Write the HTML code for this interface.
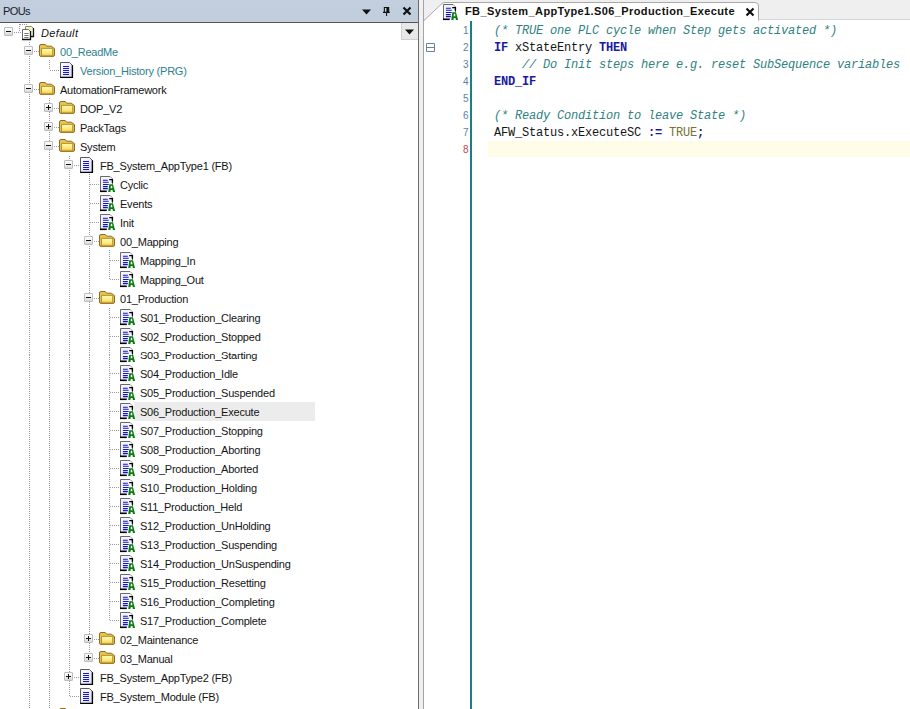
<!DOCTYPE html>
<html><head><meta charset="utf-8">
<style>
html,body{margin:0;padding:0;width:910px;height:709px;overflow:hidden;background:#fff;position:relative;font-family:"Liberation Sans",sans-serif;}
.abs{position:absolute;}
#lp{position:absolute;left:0;top:0;width:418px;height:709px;background:#fff;}
#hdr{position:absolute;left:0;top:0;width:418px;height:20px;background:linear-gradient(#c3cfde,#bfcddd);}
#hdr2{position:absolute;left:0;top:20px;width:418px;height:2px;background:#c9cdd6;}
#hdr3{position:absolute;left:0;top:22px;width:418px;height:1px;background:#4f565e;}
#pous{position:absolute;left:3px;top:1px;font-size:11px;line-height:21px;color:#1a1a2a;letter-spacing:-0.6px;}
.vd{position:absolute;width:1px;background:repeating-linear-gradient(to bottom,#9c9c9c 0 1px,transparent 1px 2px);}
.hd{position:absolute;height:1px;background:repeating-linear-gradient(to right,#9c9c9c 0 1px,transparent 1px 2px);}
.ex{position:absolute;width:7px;height:7px;border:1px solid #bdbdbd;border-radius:1px;background:linear-gradient(#fdfdfd,#f0f0f0 50%,#d6d6d6);}
.ex:before{content:"";position:absolute;left:1px;top:3px;width:5px;height:1px;background:#111;}
.ex.plus:after{content:"";position:absolute;left:3px;top:1px;width:1px;height:5px;background:#111;}
.ic{position:absolute;overflow:visible;}
.tx{position:absolute;font-size:11px;line-height:19px;white-space:pre;color:#141414;letter-spacing:-0.22px;}
.tx.it{font-style:italic;letter-spacing:0.35px;margin-left:1px;}
.tx.tl{color:#2b8190;}
#split{position:absolute;left:418px;top:0;width:1px;height:709px;background:#6a6a6a;}
#splitm{position:absolute;left:419px;top:0;width:4px;height:709px;background:#f0f0f0;}
#split2{position:absolute;left:423px;top:0;width:1px;height:709px;background:#a4a4a4;}
#tabstrip{position:absolute;left:424px;top:0;width:486px;height:20px;background:#efefef;}
#tabline{position:absolute;left:424px;top:19px;width:486px;height:1px;background:#d8d8d8;}
#ed{position:absolute;left:424px;top:20px;width:486px;height:689px;background:#fff;}
.ln{position:absolute;left:440px;width:28.5px;text-align:right;font-size:10px;line-height:17px;color:#5f7ea2;}
.cl{position:absolute;left:494px;font-family:"Liberation Mono",monospace;font-size:12px;letter-spacing:-0.2px;line-height:17px;white-space:pre;color:#141414;}
.cm{color:#2f8282;font-style:italic;}
.kw{color:#1a1a9e;font-weight:bold;}
.bl{color:#77722c;}
.op{color:#1c1c86;font-weight:bold;}
</style></head><body>
<svg width="0" height="0" style="position:absolute">
<defs>
<linearGradient id="fg" x1="0" y1="0" x2="0" y2="1"><stop offset="0" stop-color="#fffab8"/><stop offset="0.65" stop-color="#fde978"/><stop offset="1" stop-color="#eeb63c"/></linearGradient>
<linearGradient id="pg" x1="0" y1="0" x2="1" y2="1"><stop offset="0" stop-color="#ffffff"/><stop offset="1" stop-color="#dcdcf4"/></linearGradient>
<symbol id="folder" viewBox="0 0 17 13">
<path d="M0.5 2 Q0.5 0.5 2 0.5 H6.3 L7.6 2.2 H12.2 L15.5 4.6 V11 Q15.5 12.4 14 12.4 H2 Q0.5 12.4 0.5 11Z" fill="#e9c44e" stroke="#8e6c22" stroke-width="1"/>
<path d="M2.5 4.4 H13.7 V11.9 H2.5Z" fill="url(#fg)" stroke="#b08a30" stroke-width="0.9"/>
</symbol>
<symbol id="doc" viewBox="0 0 14 17">
<path d="M0.5 0.5 H9.5 L12.5 3.5 V15.5 H0.5Z" fill="url(#pg)" stroke="#5a5a5a" stroke-width="1"/>
<path d="M12.4 3.2 V15.4 H0.2" fill="none" stroke="#000" stroke-width="1.4"/>
<path d="M3 4.5H9M3 6.5H9M3 8.5H9M3 10.5H9M3 12.5H9" stroke="#1818c0" stroke-width="1.1"/>
</symbol>
<symbol id="docA" viewBox="0 0 17 17">
<path d="M0.5 15 V0.5 H10 L12.5 3 V8" fill="#f6f6ff" stroke="#6a6a6a" stroke-width="1"/>
<path d="M1 1 H10 L12 3 V8 H8 V15 H1Z" fill="#f4f4fe"/>
<path d="M9.2 3.6 H12.4 V6.8" fill="none" stroke="#000" stroke-width="1.4"/>
<path d="M0 15.3 H6.8" stroke="#000" stroke-width="1.6"/>
<path d="M2.9 4.3H7.8M2.9 6.3H8.7M2.9 8.5H8.7M2.9 10.6H7.8M2.9 12.6H7.8" stroke="#1414b4" stroke-width="1.1"/>
<path d="M9.3 8.2 H13 L15.1 15.9 H12.9 L12.5 14.1 H10.8 L10.4 15.9 H8.2Z M10.9 9.7 H12.1 L12.4 12.3 H10.6Z" fill="#0a7c10" fill-rule="evenodd"/>
</symbol>
<symbol id="def" viewBox="0 0 14 16">
<path d="M4.5 1.5 H10.5 L12.5 3.5 V11.5 H4.5Z" fill="#f0f4c0" stroke="#8a8a70" stroke-width="1"/>
<path d="M12.5 3 V11.5 H10" fill="none" stroke="#1a1a1a" stroke-width="1.3"/>
<path d="M1.5 4.5 H7.5 L9.5 6.5 V14.5 H1.5Z" fill="#fff" stroke="#6a6a6a" stroke-width="1"/>
<path d="M9.5 6 V14.5 H1" fill="none" stroke="#111" stroke-width="1.3"/>
<path d="M3.3 8.5H7.6M3.3 10.5H7.6M3.3 12.5H7.6" stroke="#6a6a6a" stroke-width="0.9"/>
</symbol>
</defs></svg>

<div id="lp">
<div id="hdr"></div><div id="hdr2"></div><div id="hdr3"></div>
<div id="pous">POUs</div>
<svg class="abs" style="left:362px;top:9px" width="9" height="6"><path d="M0 0.5 H9 L4.5 5.5Z" fill="#111"/></svg>
<svg class="abs" style="left:382px;top:6px" width="10" height="11"><path d="M1.8 0.9 H7.2 V5.8 H7.8 V6.9 H1 V5.8 H1.8Z M2.9 2 V5.8 H4.4 V2Z" fill="#111" fill-rule="evenodd"/><rect x="4" y="6.9" width="1.1" height="3" fill="#111"/></svg>
<svg class="abs" style="left:402px;top:6px" width="10" height="10"><path d="M1.5 1.5 L8.5 8.5 M8.5 1.5 L1.5 8.5" stroke="#111" stroke-width="2.2"/></svg>
<div class="abs" style="left:401px;top:23px;width:16px;height:16px;background:#e8e8e8;border-left:1px solid #cfcfcf;border-bottom:1px solid #cfcfcf;"></div>
<svg class="abs" style="left:405px;top:29px" width="9" height="6"><path d="M0 0.5 H9 L4.5 5.5Z" fill="#111"/></svg>
<div class="abs" style="left:0;top:0;width:418px;height:355px;overflow:hidden"><div class="abs" style="left:134px;top:403px;width:181px;height:19px;background:#ececec"></div>
<div class="hd" style="left:33px;top:51px;width:6px;background-position:-1px 0"></div>
<div class="hd" style="left:49px;top:70px;width:10px;background-position:-1px 0"></div>
<div class="hd" style="left:33px;top:89px;width:6px;background-position:-1px 0"></div>
<div class="hd" style="left:53px;top:108px;width:6px;background-position:-1px 0"></div>
<div class="hd" style="left:53px;top:127px;width:6px;background-position:-1px 0"></div>
<div class="hd" style="left:53px;top:146px;width:6px;background-position:-1px 0"></div>
<div class="hd" style="left:73px;top:165px;width:6px;background-position:-1px 0"></div>
<div class="hd" style="left:89px;top:184px;width:10px;background-position:-1px 0"></div>
<div class="hd" style="left:89px;top:203px;width:10px;background-position:-1px 0"></div>
<div class="hd" style="left:89px;top:222px;width:10px;background-position:-1px 0"></div>
<div class="hd" style="left:93px;top:241px;width:6px;background-position:-1px 0"></div>
<div class="hd" style="left:109px;top:260px;width:10px;background-position:-1px 0"></div>
<div class="hd" style="left:109px;top:279px;width:10px;background-position:-1px 0"></div>
<div class="hd" style="left:93px;top:298px;width:6px;background-position:-1px 0"></div>
<div class="hd" style="left:109px;top:317px;width:10px;background-position:-1px 0"></div>
<div class="hd" style="left:109px;top:336px;width:10px;background-position:-1px 0"></div>
<div class="hd" style="left:109px;top:355px;width:10px;background-position:-1px 0"></div>
<div class="hd" style="left:109px;top:374px;width:10px;background-position:-1px 0"></div>
<div class="hd" style="left:109px;top:393px;width:10px;background-position:-1px 0"></div>
<div class="hd" style="left:109px;top:412px;width:10px;background-position:-1px 0"></div>
<div class="hd" style="left:109px;top:431px;width:10px;background-position:-1px 0"></div>
<div class="hd" style="left:109px;top:450px;width:10px;background-position:-1px 0"></div>
<div class="hd" style="left:109px;top:469px;width:10px;background-position:-1px 0"></div>
<div class="hd" style="left:109px;top:488px;width:10px;background-position:-1px 0"></div>
<div class="hd" style="left:109px;top:507px;width:10px;background-position:-1px 0"></div>
<div class="hd" style="left:109px;top:526px;width:10px;background-position:-1px 0"></div>
<div class="hd" style="left:109px;top:545px;width:10px;background-position:-1px 0"></div>
<div class="hd" style="left:109px;top:564px;width:10px;background-position:-1px 0"></div>
<div class="hd" style="left:109px;top:583px;width:10px;background-position:-1px 0"></div>
<div class="hd" style="left:109px;top:602px;width:10px;background-position:-1px 0"></div>
<div class="hd" style="left:109px;top:621px;width:10px;background-position:-1px 0"></div>
<div class="hd" style="left:93px;top:640px;width:6px;background-position:-1px 0"></div>
<div class="hd" style="left:93px;top:659px;width:6px;background-position:-1px 0"></div>
<div class="hd" style="left:73px;top:678px;width:6px;background-position:-1px 0"></div>
<div class="hd" style="left:69px;top:697px;width:10px;background-position:-1px 0"></div>
<div class="hd" style="left:49px;top:716px;width:10px;background-position:-1px 0"></div>
<div class="vd" style="left:29px;top:41px;height:48px;background-position:0 -1px"></div>
<div class="vd" style="left:49px;top:60px;height:10px;background-position:0 0px"></div>
<div class="vd" style="left:49px;top:98px;height:633px;background-position:0 0px"></div>
<div class="vd" style="left:69px;top:155px;height:542px;background-position:0 -1px"></div>
<div class="vd" style="left:89px;top:174px;height:485px;background-position:0 0px"></div>
<div class="vd" style="left:109px;top:250px;height:29px;background-position:0 0px"></div>
<div class="vd" style="left:109px;top:307px;height:314px;background-position:0 -1px"></div>
<div class="vd" style="left:19px;top:24px;height:8px;background-position:0 0px"></div>
<div class="vd" style="left:29px;top:58px;height:672px;background-position:0 0px"></div>
<div class="hd" style="left:19px;top:24px;width:8px;background-position:-1px 0"></div>
<div class="hd" style="left:13px;top:32px;width:8px;background-position:-1px 0"></div>
<div class="ex minus" style="left:4px;top:27px"></div>
<svg class="ic" style="left:21px;top:25px" width="14" height="16"><use href="#def"/></svg>
<div class="tx it" style="left:40px;top:24px">Default</div>
<div class="ex minus" style="left:24px;top:46px"></div>
<svg class="ic" style="left:39px;top:44px" width="17" height="13"><use href="#folder"/></svg>
<div class="tx tl" style="left:60px;top:43px">00_ReadMe</div>
<svg class="ic" style="left:60px;top:62px" width="14" height="17"><use href="#doc"/></svg>
<div class="tx tl" style="left:80px;top:62px">Version_History (PRG)</div>
<div class="ex minus" style="left:24px;top:84px"></div>
<svg class="ic" style="left:39px;top:82px" width="17" height="13"><use href="#folder"/></svg>
<div class="tx" style="left:60px;top:81px">AutomationFramework</div>
<div class="ex plus" style="left:44px;top:103px"></div>
<svg class="ic" style="left:59px;top:101px" width="17" height="13"><use href="#folder"/></svg>
<div class="tx" style="left:80px;top:100px">DOP_V2</div>
<div class="ex plus" style="left:44px;top:122px"></div>
<svg class="ic" style="left:59px;top:120px" width="17" height="13"><use href="#folder"/></svg>
<div class="tx" style="left:80px;top:119px">PackTags</div>
<div class="ex minus" style="left:44px;top:141px"></div>
<svg class="ic" style="left:59px;top:139px" width="17" height="13"><use href="#folder"/></svg>
<div class="tx" style="left:80px;top:138px">System</div>
<div class="ex minus" style="left:64px;top:160px"></div>
<svg class="ic" style="left:80px;top:157px" width="14" height="17"><use href="#doc"/></svg>
<div class="tx" style="left:100px;top:157px">FB_System_AppType1 (FB)</div>
<svg class="ic" style="left:100px;top:176px" width="17" height="17"><use href="#docA"/></svg>
<div class="tx" style="left:120px;top:176px">Cyclic</div>
<svg class="ic" style="left:100px;top:195px" width="17" height="17"><use href="#docA"/></svg>
<div class="tx" style="left:120px;top:195px">Events</div>
<svg class="ic" style="left:100px;top:214px" width="17" height="17"><use href="#docA"/></svg>
<div class="tx" style="left:120px;top:214px">Init</div>
<div class="ex minus" style="left:84px;top:236px"></div>
<svg class="ic" style="left:99px;top:234px" width="17" height="13"><use href="#folder"/></svg>
<div class="tx" style="left:120px;top:233px">00_Mapping</div>
<svg class="ic" style="left:120px;top:252px" width="17" height="17"><use href="#docA"/></svg>
<div class="tx" style="left:140px;top:252px">Mapping_In</div>
<svg class="ic" style="left:120px;top:271px" width="17" height="17"><use href="#docA"/></svg>
<div class="tx" style="left:140px;top:271px">Mapping_Out</div>
<div class="ex minus" style="left:84px;top:293px"></div>
<svg class="ic" style="left:99px;top:291px" width="17" height="13"><use href="#folder"/></svg>
<div class="tx" style="left:120px;top:290px">01_Production</div>
<svg class="ic" style="left:120px;top:309px" width="17" height="17"><use href="#docA"/></svg>
<div class="tx" style="left:140px;top:309px">S01_Production_Clearing</div>
<svg class="ic" style="left:120px;top:328px" width="17" height="17"><use href="#docA"/></svg>
<div class="tx" style="left:140px;top:328px">S02_Production_Stopped</div>
<svg class="ic" style="left:120px;top:347px" width="17" height="17"><use href="#docA"/></svg>
<div class="tx" style="left:140px;top:347px">S03_Production_Starting</div>
<svg class="ic" style="left:120px;top:366px" width="17" height="17"><use href="#docA"/></svg>
<div class="tx" style="left:140px;top:366px">S04_Production_Idle</div>
<svg class="ic" style="left:120px;top:385px" width="17" height="17"><use href="#docA"/></svg>
<div class="tx" style="left:140px;top:385px">S05_Production_Suspended</div>
<svg class="ic" style="left:120px;top:404px" width="17" height="17"><use href="#docA"/></svg>
<div class="tx" style="left:140px;top:404px">S06_Production_Execute</div>
<svg class="ic" style="left:120px;top:423px" width="17" height="17"><use href="#docA"/></svg>
<div class="tx" style="left:140px;top:423px">S07_Production_Stopping</div>
<svg class="ic" style="left:120px;top:442px" width="17" height="17"><use href="#docA"/></svg>
<div class="tx" style="left:140px;top:442px">S08_Production_Aborting</div>
<svg class="ic" style="left:120px;top:461px" width="17" height="17"><use href="#docA"/></svg>
<div class="tx" style="left:140px;top:461px">S09_Production_Aborted</div>
<svg class="ic" style="left:120px;top:480px" width="17" height="17"><use href="#docA"/></svg>
<div class="tx" style="left:140px;top:480px">S10_Production_Holding</div>
<svg class="ic" style="left:120px;top:499px" width="17" height="17"><use href="#docA"/></svg>
<div class="tx" style="left:140px;top:499px">S11_Production_Held</div>
<svg class="ic" style="left:120px;top:518px" width="17" height="17"><use href="#docA"/></svg>
<div class="tx" style="left:140px;top:518px">S12_Production_UnHolding</div>
<svg class="ic" style="left:120px;top:537px" width="17" height="17"><use href="#docA"/></svg>
<div class="tx" style="left:140px;top:537px">S13_Production_Suspending</div>
<svg class="ic" style="left:120px;top:556px" width="17" height="17"><use href="#docA"/></svg>
<div class="tx" style="left:140px;top:556px">S14_Production_UnSuspending</div>
<svg class="ic" style="left:120px;top:575px" width="17" height="17"><use href="#docA"/></svg>
<div class="tx" style="left:140px;top:575px">S15_Production_Resetting</div>
<svg class="ic" style="left:120px;top:594px" width="17" height="17"><use href="#docA"/></svg>
<div class="tx" style="left:140px;top:594px">S16_Production_Completing</div>
<svg class="ic" style="left:120px;top:613px" width="17" height="17"><use href="#docA"/></svg>
<div class="tx" style="left:140px;top:613px">S17_Production_Complete</div>
<div class="ex plus" style="left:84px;top:635px"></div>
<svg class="ic" style="left:99px;top:633px" width="17" height="13"><use href="#folder"/></svg>
<div class="tx" style="left:120px;top:632px">02_Maintenance</div>
<div class="ex plus" style="left:84px;top:654px"></div>
<svg class="ic" style="left:99px;top:652px" width="17" height="13"><use href="#folder"/></svg>
<div class="tx" style="left:120px;top:651px">03_Manual</div>
<div class="ex plus" style="left:64px;top:673px"></div>
<svg class="ic" style="left:80px;top:670px" width="14" height="17"><use href="#doc"/></svg>
<div class="tx" style="left:100px;top:670px">FB_System_AppType2 (FB)</div>
<svg class="ic" style="left:80px;top:689px" width="14" height="17"><use href="#doc"/></svg>
<div class="tx" style="left:100px;top:689px">FB_System_Module (FB)</div>
<svg class="ic" style="left:59px;top:709px" width="17" height="13"><use href="#folder"/></svg></div><div class="abs" style="left:0;top:355px;width:418px;height:354px;overflow:hidden"><div class="abs" style="left:0;top:-356px;width:418px;height:740px"><div class="abs" style="left:134px;top:403px;width:181px;height:19px;background:#ececec"></div>
<div class="hd" style="left:33px;top:51px;width:6px;background-position:-1px 0"></div>
<div class="hd" style="left:49px;top:70px;width:10px;background-position:-1px 0"></div>
<div class="hd" style="left:33px;top:89px;width:6px;background-position:-1px 0"></div>
<div class="hd" style="left:53px;top:108px;width:6px;background-position:-1px 0"></div>
<div class="hd" style="left:53px;top:127px;width:6px;background-position:-1px 0"></div>
<div class="hd" style="left:53px;top:146px;width:6px;background-position:-1px 0"></div>
<div class="hd" style="left:73px;top:165px;width:6px;background-position:-1px 0"></div>
<div class="hd" style="left:89px;top:184px;width:10px;background-position:-1px 0"></div>
<div class="hd" style="left:89px;top:203px;width:10px;background-position:-1px 0"></div>
<div class="hd" style="left:89px;top:222px;width:10px;background-position:-1px 0"></div>
<div class="hd" style="left:93px;top:241px;width:6px;background-position:-1px 0"></div>
<div class="hd" style="left:109px;top:260px;width:10px;background-position:-1px 0"></div>
<div class="hd" style="left:109px;top:279px;width:10px;background-position:-1px 0"></div>
<div class="hd" style="left:93px;top:298px;width:6px;background-position:-1px 0"></div>
<div class="hd" style="left:109px;top:317px;width:10px;background-position:-1px 0"></div>
<div class="hd" style="left:109px;top:336px;width:10px;background-position:-1px 0"></div>
<div class="hd" style="left:109px;top:355px;width:10px;background-position:-1px 0"></div>
<div class="hd" style="left:109px;top:374px;width:10px;background-position:-1px 0"></div>
<div class="hd" style="left:109px;top:393px;width:10px;background-position:-1px 0"></div>
<div class="hd" style="left:109px;top:412px;width:10px;background-position:-1px 0"></div>
<div class="hd" style="left:109px;top:431px;width:10px;background-position:-1px 0"></div>
<div class="hd" style="left:109px;top:450px;width:10px;background-position:-1px 0"></div>
<div class="hd" style="left:109px;top:469px;width:10px;background-position:-1px 0"></div>
<div class="hd" style="left:109px;top:488px;width:10px;background-position:-1px 0"></div>
<div class="hd" style="left:109px;top:507px;width:10px;background-position:-1px 0"></div>
<div class="hd" style="left:109px;top:526px;width:10px;background-position:-1px 0"></div>
<div class="hd" style="left:109px;top:545px;width:10px;background-position:-1px 0"></div>
<div class="hd" style="left:109px;top:564px;width:10px;background-position:-1px 0"></div>
<div class="hd" style="left:109px;top:583px;width:10px;background-position:-1px 0"></div>
<div class="hd" style="left:109px;top:602px;width:10px;background-position:-1px 0"></div>
<div class="hd" style="left:109px;top:621px;width:10px;background-position:-1px 0"></div>
<div class="hd" style="left:93px;top:640px;width:6px;background-position:-1px 0"></div>
<div class="hd" style="left:93px;top:659px;width:6px;background-position:-1px 0"></div>
<div class="hd" style="left:73px;top:678px;width:6px;background-position:-1px 0"></div>
<div class="hd" style="left:69px;top:697px;width:10px;background-position:-1px 0"></div>
<div class="hd" style="left:49px;top:716px;width:10px;background-position:-1px 0"></div>
<div class="vd" style="left:29px;top:41px;height:48px;background-position:0 -1px"></div>
<div class="vd" style="left:49px;top:60px;height:10px;background-position:0 0px"></div>
<div class="vd" style="left:49px;top:98px;height:633px;background-position:0 0px"></div>
<div class="vd" style="left:69px;top:155px;height:542px;background-position:0 -1px"></div>
<div class="vd" style="left:89px;top:174px;height:485px;background-position:0 0px"></div>
<div class="vd" style="left:109px;top:250px;height:29px;background-position:0 0px"></div>
<div class="vd" style="left:109px;top:307px;height:314px;background-position:0 -1px"></div>
<div class="vd" style="left:19px;top:24px;height:8px;background-position:0 0px"></div>
<div class="vd" style="left:29px;top:58px;height:672px;background-position:0 0px"></div>
<div class="hd" style="left:19px;top:24px;width:8px;background-position:-1px 0"></div>
<div class="hd" style="left:13px;top:32px;width:8px;background-position:-1px 0"></div>
<div class="ex minus" style="left:4px;top:27px"></div>
<svg class="ic" style="left:21px;top:25px" width="14" height="16"><use href="#def"/></svg>
<div class="tx it" style="left:40px;top:24px">Default</div>
<div class="ex minus" style="left:24px;top:46px"></div>
<svg class="ic" style="left:39px;top:44px" width="17" height="13"><use href="#folder"/></svg>
<div class="tx tl" style="left:60px;top:43px">00_ReadMe</div>
<svg class="ic" style="left:60px;top:62px" width="14" height="17"><use href="#doc"/></svg>
<div class="tx tl" style="left:80px;top:62px">Version_History (PRG)</div>
<div class="ex minus" style="left:24px;top:84px"></div>
<svg class="ic" style="left:39px;top:82px" width="17" height="13"><use href="#folder"/></svg>
<div class="tx" style="left:60px;top:81px">AutomationFramework</div>
<div class="ex plus" style="left:44px;top:103px"></div>
<svg class="ic" style="left:59px;top:101px" width="17" height="13"><use href="#folder"/></svg>
<div class="tx" style="left:80px;top:100px">DOP_V2</div>
<div class="ex plus" style="left:44px;top:122px"></div>
<svg class="ic" style="left:59px;top:120px" width="17" height="13"><use href="#folder"/></svg>
<div class="tx" style="left:80px;top:119px">PackTags</div>
<div class="ex minus" style="left:44px;top:141px"></div>
<svg class="ic" style="left:59px;top:139px" width="17" height="13"><use href="#folder"/></svg>
<div class="tx" style="left:80px;top:138px">System</div>
<div class="ex minus" style="left:64px;top:160px"></div>
<svg class="ic" style="left:80px;top:157px" width="14" height="17"><use href="#doc"/></svg>
<div class="tx" style="left:100px;top:157px">FB_System_AppType1 (FB)</div>
<svg class="ic" style="left:100px;top:176px" width="17" height="17"><use href="#docA"/></svg>
<div class="tx" style="left:120px;top:176px">Cyclic</div>
<svg class="ic" style="left:100px;top:195px" width="17" height="17"><use href="#docA"/></svg>
<div class="tx" style="left:120px;top:195px">Events</div>
<svg class="ic" style="left:100px;top:214px" width="17" height="17"><use href="#docA"/></svg>
<div class="tx" style="left:120px;top:214px">Init</div>
<div class="ex minus" style="left:84px;top:236px"></div>
<svg class="ic" style="left:99px;top:234px" width="17" height="13"><use href="#folder"/></svg>
<div class="tx" style="left:120px;top:233px">00_Mapping</div>
<svg class="ic" style="left:120px;top:252px" width="17" height="17"><use href="#docA"/></svg>
<div class="tx" style="left:140px;top:252px">Mapping_In</div>
<svg class="ic" style="left:120px;top:271px" width="17" height="17"><use href="#docA"/></svg>
<div class="tx" style="left:140px;top:271px">Mapping_Out</div>
<div class="ex minus" style="left:84px;top:293px"></div>
<svg class="ic" style="left:99px;top:291px" width="17" height="13"><use href="#folder"/></svg>
<div class="tx" style="left:120px;top:290px">01_Production</div>
<svg class="ic" style="left:120px;top:309px" width="17" height="17"><use href="#docA"/></svg>
<div class="tx" style="left:140px;top:309px">S01_Production_Clearing</div>
<svg class="ic" style="left:120px;top:328px" width="17" height="17"><use href="#docA"/></svg>
<div class="tx" style="left:140px;top:328px">S02_Production_Stopped</div>
<svg class="ic" style="left:120px;top:347px" width="17" height="17"><use href="#docA"/></svg>
<div class="tx" style="left:140px;top:347px">S03_Production_Starting</div>
<svg class="ic" style="left:120px;top:366px" width="17" height="17"><use href="#docA"/></svg>
<div class="tx" style="left:140px;top:366px">S04_Production_Idle</div>
<svg class="ic" style="left:120px;top:385px" width="17" height="17"><use href="#docA"/></svg>
<div class="tx" style="left:140px;top:385px">S05_Production_Suspended</div>
<svg class="ic" style="left:120px;top:404px" width="17" height="17"><use href="#docA"/></svg>
<div class="tx" style="left:140px;top:404px">S06_Production_Execute</div>
<svg class="ic" style="left:120px;top:423px" width="17" height="17"><use href="#docA"/></svg>
<div class="tx" style="left:140px;top:423px">S07_Production_Stopping</div>
<svg class="ic" style="left:120px;top:442px" width="17" height="17"><use href="#docA"/></svg>
<div class="tx" style="left:140px;top:442px">S08_Production_Aborting</div>
<svg class="ic" style="left:120px;top:461px" width="17" height="17"><use href="#docA"/></svg>
<div class="tx" style="left:140px;top:461px">S09_Production_Aborted</div>
<svg class="ic" style="left:120px;top:480px" width="17" height="17"><use href="#docA"/></svg>
<div class="tx" style="left:140px;top:480px">S10_Production_Holding</div>
<svg class="ic" style="left:120px;top:499px" width="17" height="17"><use href="#docA"/></svg>
<div class="tx" style="left:140px;top:499px">S11_Production_Held</div>
<svg class="ic" style="left:120px;top:518px" width="17" height="17"><use href="#docA"/></svg>
<div class="tx" style="left:140px;top:518px">S12_Production_UnHolding</div>
<svg class="ic" style="left:120px;top:537px" width="17" height="17"><use href="#docA"/></svg>
<div class="tx" style="left:140px;top:537px">S13_Production_Suspending</div>
<svg class="ic" style="left:120px;top:556px" width="17" height="17"><use href="#docA"/></svg>
<div class="tx" style="left:140px;top:556px">S14_Production_UnSuspending</div>
<svg class="ic" style="left:120px;top:575px" width="17" height="17"><use href="#docA"/></svg>
<div class="tx" style="left:140px;top:575px">S15_Production_Resetting</div>
<svg class="ic" style="left:120px;top:594px" width="17" height="17"><use href="#docA"/></svg>
<div class="tx" style="left:140px;top:594px">S16_Production_Completing</div>
<svg class="ic" style="left:120px;top:613px" width="17" height="17"><use href="#docA"/></svg>
<div class="tx" style="left:140px;top:613px">S17_Production_Complete</div>
<div class="ex plus" style="left:84px;top:635px"></div>
<svg class="ic" style="left:99px;top:633px" width="17" height="13"><use href="#folder"/></svg>
<div class="tx" style="left:120px;top:632px">02_Maintenance</div>
<div class="ex plus" style="left:84px;top:654px"></div>
<svg class="ic" style="left:99px;top:652px" width="17" height="13"><use href="#folder"/></svg>
<div class="tx" style="left:120px;top:651px">03_Manual</div>
<div class="ex plus" style="left:64px;top:673px"></div>
<svg class="ic" style="left:80px;top:670px" width="14" height="17"><use href="#doc"/></svg>
<div class="tx" style="left:100px;top:670px">FB_System_AppType2 (FB)</div>
<svg class="ic" style="left:80px;top:689px" width="14" height="17"><use href="#doc"/></svg>
<div class="tx" style="left:100px;top:689px">FB_System_Module (FB)</div>
<svg class="ic" style="left:59px;top:709px" width="17" height="13"><use href="#folder"/></svg></div></div>
</div>
<div id="split"></div><div id="splitm"></div><div id="split2"></div>
<div id="tabstrip"></div><div id="tabline"></div>
<svg class="abs" style="left:424px;top:0" width="340" height="21"><path d="M0 20.5 L18 3.5 Q19 2.5 21 2.5 H331 Q334.5 2.5 334.5 6 V20.5" fill="#fff" stroke="#a9a9a9" stroke-width="1"/></svg>
<svg class="abs" style="left:443px;top:4px" width="17" height="17"><use href="#docA"/></svg>
<div class="abs" style="left:465px;top:1px;font-size:11px;line-height:21px;font-weight:bold;letter-spacing:0.4px;color:#111;white-space:pre">FB_System_AppType1.S06_Production_Execute</div>
<svg class="abs" style="left:745px;top:7px" width="10" height="10"><path d="M1.5 1.5 L8.5 8.5 M8.5 1.5 L1.5 8.5" stroke="#111" stroke-width="2.2"/></svg>
<div id="edwrap">
<div class="abs" style="left:470px;top:21px;width:2px;height:688px;background:#1b7f80"></div>
<div class="abs" style="left:488px;top:141px;width:422px;height:16px;background:#fffde8"></div>
<svg class="abs" style="left:426px;top:43px" width="9" height="9"><path d="M0.5 0.5H8.5V8.5H0.5Z M0.5 4.5H8.5" fill="none" stroke="#6a7f98" stroke-width="1"/></svg>
<div class="ln" style="top:22px">1</div>
<div class="cl" style="top:23px"><span class="cm">(* TRUE one PLC cycle when Step gets activated *)</span></div>
<div class="ln" style="top:39px">2</div>
<div class="cl" style="top:40px"><span class="kw">IF</span> xStateEntry <span class="kw">THEN</span></div>
<div class="ln" style="top:56px">3</div>
<div class="cl" style="top:57px">    <span class="cm">// Do Init steps here e.g. reset SubSequence variables</span></div>
<div class="ln" style="top:73px">4</div>
<div class="cl" style="top:74px"><span class="kw">END_IF</span></div>
<div class="ln" style="top:90px">5</div>
<div class="cl" style="top:91px"></div>
<div class="ln" style="top:107px">6</div>
<div class="cl" style="top:108px"><span class="cm">(* Ready Condition to leave State *)</span></div>
<div class="ln" style="top:124px">7</div>
<div class="cl" style="top:125px">AFW_Status.xExecuteSC <span class="op">:=</span> <span class="bl">TRUE</span><span class="op">;</span></div>
<div class="ln" style="top:141px;color:#c04848">8</div>
<div class="cl" style="top:142px"></div>
</div>
</body></html>
